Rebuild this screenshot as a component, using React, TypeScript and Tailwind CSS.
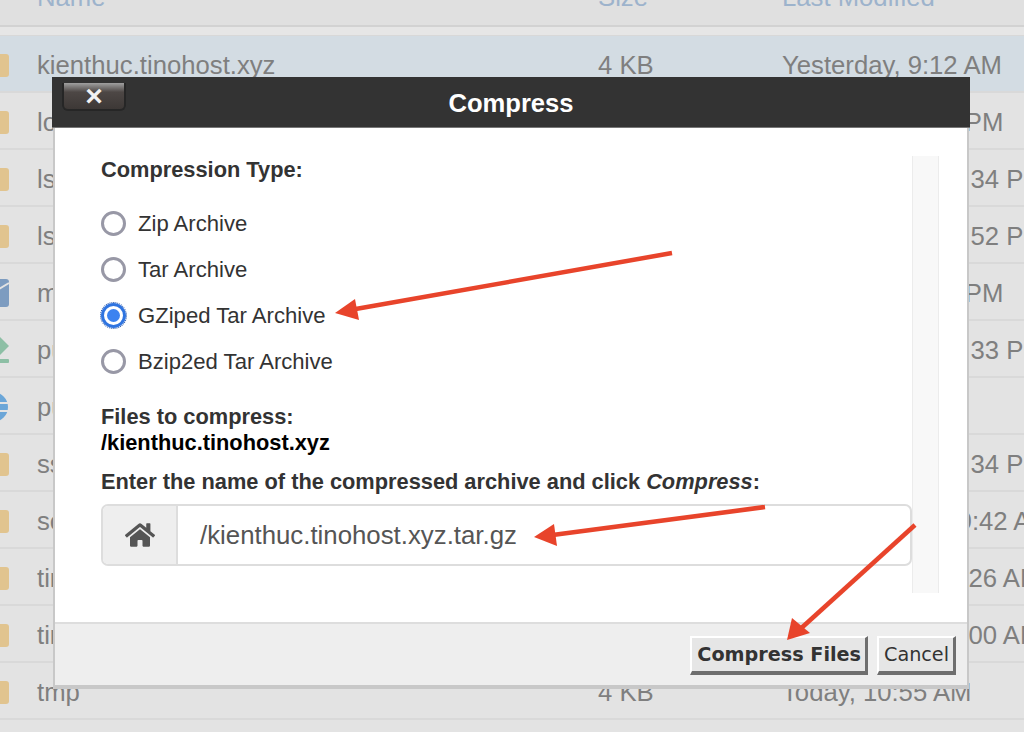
import { FaHome } from "react-icons/fa"

const rows = [
  { name: "kienthuc.tinohost.xyz", size: "4 KB", date: "Yesterday, 9:12 AM", icon: "folder", selected: true },
  { name: "logs", size: "4 KB", date: "Yesterday, 9:12 PM", icon: "folder" },
  { name: "lscache", size: "4 KB", date: "February 12, 12:34 PM", icon: "folder" },
  { name: "lscmd", size: "4 KB", date: "February 12, 12:52 PM", icon: "folder" },
  { name: "mail", size: "4 KB", date: "Yesterday, 9:10 PM", icon: "mail" },
  { name: "public_ftp", size: "4 KB", date: "February 12, 12:33 PM", icon: "ftp" },
  { name: "public_html", size: "4 KB", date: "", icon: "globe" },
  { name: "ssl", size: "4 KB", date: "February 12, 12:34 PM", icon: "folder" },
  { name: "softaculous", size: "4 KB", date: "September 12, 9:42 AM", icon: "folder" },
  { name: "tino", size: "4 KB", date: "February 12, 11:26 AM", icon: "folder" },
  { name: "tinohost", size: "4 KB", date: "February 12, 11:00 AM", icon: "folder" },
  { name: "tmp", size: "4 KB", date: "Today, 10:55 AM", icon: "folder" },
]

function RowIcon({ icon }: { icon: string }) {
  if (icon === "mail") {
    return (
      <svg width="10" height="30" viewBox="0 0 10 30">
        <rect x="-12" y="1" width="21" height="28" rx="3" fill="#7d9cc0" />
        <path d="M-8 15 L9 5" stroke="#e3e3e3" strokeWidth="2" fill="none" />
      </svg>
    )
  }
  if (icon === "ftp") {
    return (
      <svg width="10" height="28" viewBox="0 0 10 28">
        <path d="M0 1 L9 10 L0 19 Z" fill="#8dbfa5" />
        <rect x="-4" y="23" width="13" height="4" rx="1" fill="#8dbfa5" />
      </svg>
    )
  }
  if (icon === "globe") {
    return (
      <svg width="10" height="32" viewBox="0 0 10 32">
        <circle cx="-7" cy="16" r="15" fill="#6ba6d8" />
        <path d="M-7 12 H8 M-7 20 H8" stroke="#e3e3e3" strokeWidth="2" />
      </svg>
    )
  }
  return <div className="ml-[-12px] mt-[1px] h-[23px] w-[21px] rounded-[3px] bg-[#e1c48f]" />
}

function Arrow({ x1, y1, x2, y2, head }: { x1: number; y1: number; x2: number; y2: number; head: string }) {
  return (
    <>
      <line x1={x1} y1={y1} x2={x2} y2={y2} stroke="#e8442b" strokeWidth="4.5" />
      <polygon points={head} fill="#e8442b" />
    </>
  )
}

function Radio({ label, checked }: { label: string; checked?: boolean }) {
  return (
    <div className="flex h-[46px] items-center gap-[12px]">
      {checked ? (
        <div className="flex h-[25px] w-[25px] items-center justify-center rounded-full border-[3px] border-[#2f74e0] outline-1 outline-dotted outline-[#1d4fa8]">
          <div className="h-[13px] w-[13px] rounded-full bg-[#3b82f0]" />
        </div>
      ) : (
        <div className="h-[25px] w-[25px] rounded-full border-[3px] border-[#9898a6] bg-white" />
      )}
      <span className="pt-[1px] text-[22.1px] text-[#333]">{label}</span>
    </div>
  )
}

export default function App() {
  return (
    <div className="relative h-[732px] w-[1024px] overflow-hidden bg-[#e3e3e3] font-['Liberation_Sans',Arial,sans-serif]">
      {/* file table behind the dialog */}
      <div className="flex h-[27px] items-start overflow-hidden border-b-2 border-[#d2d2d2] bg-[#e0e0e0] text-[25.7px] leading-[20px] text-[#9db3cc]">
        <span className="ml-[37px] mt-[-13px] w-[561px]">Name</span>
        <span className="mt-[-13px] w-[184px]">Size</span>
        <span className="mt-[-13px]">Last Modified</span>
      </div>
      <div className="h-[9px] border-b border-[#d8d8d8] bg-[#e6e6e6]" />
      {rows.map((row) => (
        <div
          key={row.name}
          className={`flex h-[57px] items-center overflow-hidden border-b-2 border-[#d9d9d9] pt-[3px] whitespace-nowrap text-[25.7px] text-[#7f7f7f] ${
            row.selected ? "bg-[#d3dce3]" : "bg-[#e3e3e3]"
          }`}
        >
          <div className="w-[37px] shrink-0">
            <RowIcon icon={row.icon} />
          </div>
          <span className="w-[561px] shrink-0">{row.name}</span>
          <span className="w-[184px] shrink-0">{row.size}</span>
          <span>{row.date}</span>
        </div>
      ))}

      {/* dialog */}
      <div className="absolute left-[52px] top-[77px] w-[918px]">
        <div className="relative flex h-[51px] items-center justify-center border-b border-[#777] bg-[#333] pt-[2px]">
          <div className="absolute left-[10px] top-[6px] flex h-[28px] w-[64px] items-center justify-center rounded-b-[6px] border-2 border-t-0 border-[#262626] bg-[linear-gradient(to_bottom,#a0a0a0,#4d4745_35%,#3d3836)] text-[30px] font-bold leading-none text-[#f2f2f2]">
            ×
          </div>
          <span className="text-[25.6px] font-bold text-white">Compress</span>
        </div>
        <div className="mx-[1px] border-x-2 border-b-4 border-x-[#c8c8c8] border-b-[#c8c8c8]">
          <div className="relative h-[494px] bg-white pl-[46px] pt-[28px]">
            <div className="absolute right-[28px] top-[28px] h-[437px] w-[27px] border-x border-[#ececec] bg-[#f8f8f8]" />
            <div className="text-[21.8px] font-bold leading-[28px] text-[#333]">Compression Type:</div>
            <div className="mt-[16px] flex flex-col">
              <Radio label="Zip Archive" />
              <Radio label="Tar Archive" />
              <Radio label="GZiped Tar Archive" checked />
              <Radio label="Bzip2ed Tar Archive" />
            </div>
            <div className="mt-[20px] text-[21.8px] font-bold leading-[26px] text-[#333]">Files to compress:</div>
            <div className="text-[21.8px] font-bold leading-[26px] text-black">/kienthuc.tinohost.xyz</div>
            <div className="mt-[12px] text-[21.8px] font-bold leading-[28px] text-[#333]">
              Enter the name of the compressed archive and click <em>Compress</em>:
            </div>
            <div className="mt-[8px] flex h-[62px] w-[811px] rounded-[7px] border-2 border-[#ddd]">
              <div className="flex w-[75px] items-center justify-center rounded-l-[5px] border-r-2 border-[#ddd] bg-[#eee] text-[#555]">
                <FaHome size={30} />
              </div>
              <div className="flex flex-1 items-center pl-[22px] text-[25.8px] text-[#555]">/kienthuc.tinohost.xyz.tar.gz</div>
            </div>
          </div>
          <div className="flex h-[63px] items-start justify-end gap-[9px] border-t-2 border-[#ddd] bg-[#eee] pr-[11px] pt-[12px] font-['DejaVu_Sans',sans-serif] text-[19.2px] text-[#333]">
            <div className="flex h-[39px] items-center border-2 border-b-[4px] border-r-[3px] border-[#fff] border-b-[#6e6e6e] border-r-[#6e6e6e] bg-[#e6e6e6] pl-[5px] pr-[4px] pt-[2px] font-bold">Compress Files</div>
            <div className="flex h-[39px] items-center border-2 border-b-[4px] border-r-[3px] border-[#fff] border-b-[#6e6e6e] border-r-[#6e6e6e] bg-[#e6e6e6] pl-[5px] pr-[4px] pt-[2px]">Cancel</div>
          </div>
        </div>
      </div>

      {/* annotation arrows */}
      <svg className="absolute left-0 top-0" width="1024" height="732" viewBox="0 0 1024 732">
        <Arrow x1={672} y1={253} x2={350} y2={310} head="335,313 355,299 359,320" />
        <Arrow x1={765} y1={507} x2={545} y2={536} head="534,537 554,524 557,546" />
        <Arrow x1={915} y1={525} x2={797} y2={632} head="787,640 792,618 810,633" />
      </svg>
    </div>
  )
}
